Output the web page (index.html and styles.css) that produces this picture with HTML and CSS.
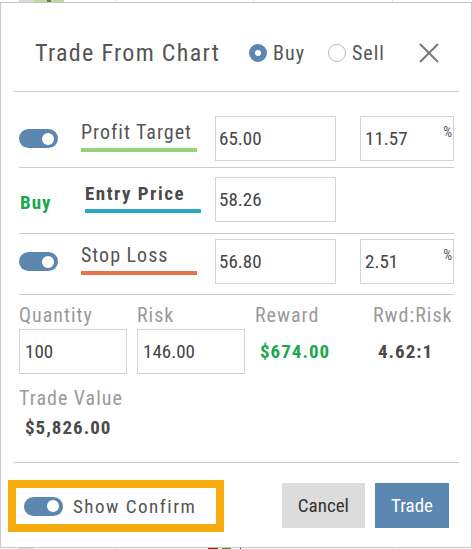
FILE: index.html
```html
<!DOCTYPE html>
<html lang="en">
<head>
  <meta charset="UTF-8" />
  <meta name="viewport" content="width=device-width, initial-scale=1.0" />
  <title>Trade From Chart</title>
  <link rel="stylesheet" href="styles.css">
</head>
<body>
  <div class="chart-edge chart-edge-top"></div>

  <div class="dialog">
    <header class="dialog-header">
      <h2 class="dialog-title">Trade From Chart</h2>
      <div class="side-picker">
        <label class="radio"><span class="radio-dot checked"></span>Buy</label>
        <label class="radio"><span class="radio-dot"></span>Sell</label>
      </div>
      <button class="close-btn" aria-label="Close">
        <svg width="20" height="20" viewBox="0 0 20 20" fill="none" stroke="currentColor" stroke-width="2">
          <path d="M1 1l18 18"></path>
          <path d="M19 1L1 19"></path>
        </svg>
      </button>
    </header>

    <div class="divider"></div>

    <div class="dialog-body">
      <div class="level-row row-target">
        <span class="toggle"><span class="knob"></span></span>
        <div class="level-label target">Profit Target</div>
        <input class="field" type="text" value="65.00">
        <div class="pct-field">
          <input type="text" value="11.57">
          <span class="pct-sign">%</span>
        </div>
      </div>

      <div class="level-row row-entry">
        <span class="side-tag">Buy</span>
        <div class="level-label entry">Entry Price</div>
        <input class="field" type="text" value="58.26">
      </div>

      <div class="level-row row-stop">
        <span class="toggle"><span class="knob"></span></span>
        <div class="level-label stop">Stop Loss</div>
        <input class="field" type="text" value="56.80">
        <div class="pct-field">
          <input type="text" value="2.51">
          <span class="pct-sign">%</span>
        </div>
      </div>

      <div class="stats">
        <div class="stat">
          <div class="stat-label">Quantity</div>
          <input class="field field-sm" type="text" value="100">
        </div>
        <div class="stat">
          <div class="stat-label">Risk</div>
          <input class="field field-sm" type="text" value="146.00">
        </div>
        <div class="stat">
          <div class="stat-label">Reward</div>
          <div class="stat-value positive">$674.00</div>
        </div>
        <div class="stat">
          <div class="stat-label">Rwd:Risk</div>
          <div class="stat-value">4.62:1</div>
        </div>
      </div>

      <div class="trade-value">
        <div class="stat-label">Trade Value</div>
        <div class="trade-value-amount">$5,826.00</div>
      </div>
    </div>

    <div class="divider"></div>

    <footer class="dialog-footer">
      <label class="confirm-toggle">
        <span class="toggle"><span class="knob"></span></span>
        Show Confirm
      </label>
      <div class="actions">
        <button class="btn btn-cancel">Cancel</button>
        <button class="btn btn-trade">Trade</button>
      </div>
    </footer>
  </div>

  <div class="chart-edge chart-edge-bottom"></div>
</body>
</html>
```

FILE: styles.css
```css
:root {
  --accent: #5b87b0;
  --text: #555555;
  --text-strong: #4a4a4a;
  --text-muted: #9a9a9a;
  --green: #1aa84d;
  --line: #cccccc;
  --field-border: #cfd3da;
  --highlight: #f8ab0c;
}

* {
  margin: 0;
  padding: 0;
  box-sizing: border-box;
}

body {
  font-family: 'Roboto', 'Liberation Sans', sans-serif;
  font-stretch: 87.5%;
  color: var(--text);
  background: #ffffff;
  width: 472px;
}

/* bits of the chart peeking out above and below the dialog */
.chart-edge {
  height: 2px;
  background:
    linear-gradient(#dcdcdc, #dcdcdc) 19px 0 / 14px 100% no-repeat,
    linear-gradient(#e6e6e6, #e6e6e6) 116px 0 / 1px 100% no-repeat,
    linear-gradient(#e6e6e6, #e6e6e6) 253px 0 / 1px 100% no-repeat,
    linear-gradient(#e6e6e6, #e6e6e6) 392px 0 / 1px 100% no-repeat;
}

.chart-edge-top {
  background:
    linear-gradient(#dcdcdc, #dcdcdc) 19px 0 / 14px 100% no-repeat,
    linear-gradient(#6b7b5f, #6b7b5f) 47px 0 / 4px 100% no-repeat,
    linear-gradient(#b6dca2, #b6dca2) 33px 0 / 31px 100% no-repeat,
    linear-gradient(#e6e6e6, #e6e6e6) 116px 0 / 1px 100% no-repeat,
    linear-gradient(#e6e6e6, #e6e6e6) 253px 0 / 1px 100% no-repeat,
    linear-gradient(#e6e6e6, #e6e6e6) 392px 0 / 1px 100% no-repeat;
}

.chart-edge-bottom {
  height: 1px;
  background:
    linear-gradient(#dcdcdc, #dcdcdc) 19px 0 / 14px 100% no-repeat,
    linear-gradient(#a3140f, #a3140f) 208px 0 / 10px 100% no-repeat,
    linear-gradient(#4e8a36, #4e8a36) 222px 0 / 9px 100% no-repeat,
    linear-gradient(#333333, #333333) 240px 0 / 1px 100% no-repeat,
    linear-gradient(#e6e6e6, #e6e6e6) 116px 0 / 1px 100% no-repeat,
    linear-gradient(#e6e6e6, #e6e6e6) 392px 0 / 1px 100% no-repeat;
}

.dialog {
  width: 472px;
  height: 546px;
  border: 1px solid #c8c8c8;
  background: #ffffff;
  display: flex;
  flex-direction: column;
}

/* Header */
.dialog-header {
  height: 88px;
  padding: 12px 32px 0 34px;
  display: flex;
  align-items: center;
}

.dialog-title {
  font-size: 24px;
  font-weight: 400;
  letter-spacing: 1.3px;
  color: var(--text);
}

.side-picker {
  display: flex;
  gap: 23px;
  margin-left: 29px;
}

.radio {
  display: flex;
  align-items: center;
  gap: 6px;
  font-size: 20px;
  letter-spacing: 1px;
  color: var(--text);
}

.radio-dot {
  width: 18px;
  height: 18px;
  border-radius: 50%;
  border: 1px solid #bdbdbd;
}

.radio-dot.checked {
  border: 6px solid var(--accent);
}

.close-btn {
  margin-left: auto;
  background: none;
  border: none;
  color: #777777;
  display: flex;
}

.divider {
  height: 1px;
  background: var(--line);
  margin: 0 12px 0 13px;
}

/* Body */
.dialog-body {
  padding: 0 17px 0 18px;
}

.level-row {
  display: grid;
  grid-template-columns: 62px 134px 121px 1fr;
  align-items: center;
  border-bottom: 1px solid var(--line);
}

.row-target { padding: 24px 0 6px; }
.row-entry  { padding: 9px 0 11px; }
.row-stop   { padding: 5px 0 10px; }

.toggle {
  width: 39px;
  height: 19px;
  border-radius: 10px;
  background: var(--accent);
  display: flex;
  align-items: center;
  justify-content: flex-end;
  padding-right: 4px;
}

.knob {
  width: 12px;
  height: 12px;
  border-radius: 50%;
  background: #ffffff;
}

.side-tag {
  font-size: 19px;
  font-weight: 700;
  letter-spacing: 1px;
  color: var(--green);
  padding-left: 1px;
  margin-top: 5px;
}

.level-label {
  width: 116px;
  font-size: 20px;
  line-height: 24px;
  letter-spacing: 1px;
  color: var(--text);
  margin-bottom: 6px;
}

.level-label::after {
  content: "";
  display: block;
  height: 4px;
  margin-top: 4px;
}

.level-label.target::after { background: #96d17c; }
.level-label.stop::after   { background: #e8734a; }

.level-label.entry {
  font-size: 19px;
  font-weight: 700;
  letter-spacing: 1.5px;
  color: var(--text-strong);
  margin-left: 4px;
  margin-bottom: 4px;
}

.level-label.entry::after {
  background: #27a9c7;
  margin-top: 3px;
}

.field {
  width: 121px;
  height: 45px;
  border: 1px solid var(--field-border);
  padding: 0 3px;
  font-family: inherit;
  font-stretch: inherit;
  font-size: 19px;
  color: #444444;
  background: #ffffff;
}

.field-sm {
  width: 108px;
  padding: 0 5px;
}

.pct-field {
  justify-self: end;
  width: 94px;
  height: 45px;
  border: 1px solid var(--field-border);
  display: flex;
}

.pct-field input {
  width: 100%;
  min-width: 0;
  border: none;
  padding: 0 4px;
  font-family: inherit;
  font-stretch: inherit;
  font-size: 19px;
  color: #444444;
}

.pct-sign {
  font-size: 14px;
  color: var(--text);
  padding: 7px 1px 0 0;
}

/* Quantity / risk summary */
.stats {
  display: grid;
  grid-template-columns: 118px 118px 118px 1fr;
  padding-top: 8px;
}

.stat-label {
  font-size: 20px;
  line-height: 24px;
  letter-spacing: 1px;
  color: var(--text-muted);
  margin-bottom: 2px;
}

.stat-value {
  height: 45px;
  display: flex;
  align-items: center;
  padding-left: 5px;
  font-size: 19px;
  font-weight: 700;
  letter-spacing: 1px;
  color: var(--text-strong);
}

.stat-value.positive {
  color: var(--green);
}

.trade-value {
  padding: 12px 0 22px;
}

.trade-value .stat-label {
  margin-bottom: 6px;
}

.trade-value-amount {
  font-size: 19px;
  line-height: 24px;
  font-weight: 700;
  letter-spacing: 1px;
  color: var(--text-strong);
  padding-left: 6px;
}

/* Footer */
.dialog-footer {
  flex: 1;
  display: flex;
  align-items: flex-start;
  justify-content: space-between;
  padding: 17px 22px 0 7px;
}

.confirm-toggle {
  height: 52px;
  display: flex;
  align-items: center;
  gap: 10px;
  border: 8px solid var(--highlight);
  padding: 0 20px 0 8px;
  font-size: 19px;
  letter-spacing: 1.5px;
  color: var(--text);
}

.actions {
  display: flex;
  gap: 10px;
  margin-top: 3px;
}

.btn {
  height: 45px;
  padding: 0 16px;
  border: none;
  font-family: inherit;
  font-stretch: inherit;
  font-size: 19px;
}

.btn-cancel {
  background: #dcdcdc;
  color: #333333;
}

.btn-trade {
  background: var(--accent);
  color: #ffffff;
}
```
